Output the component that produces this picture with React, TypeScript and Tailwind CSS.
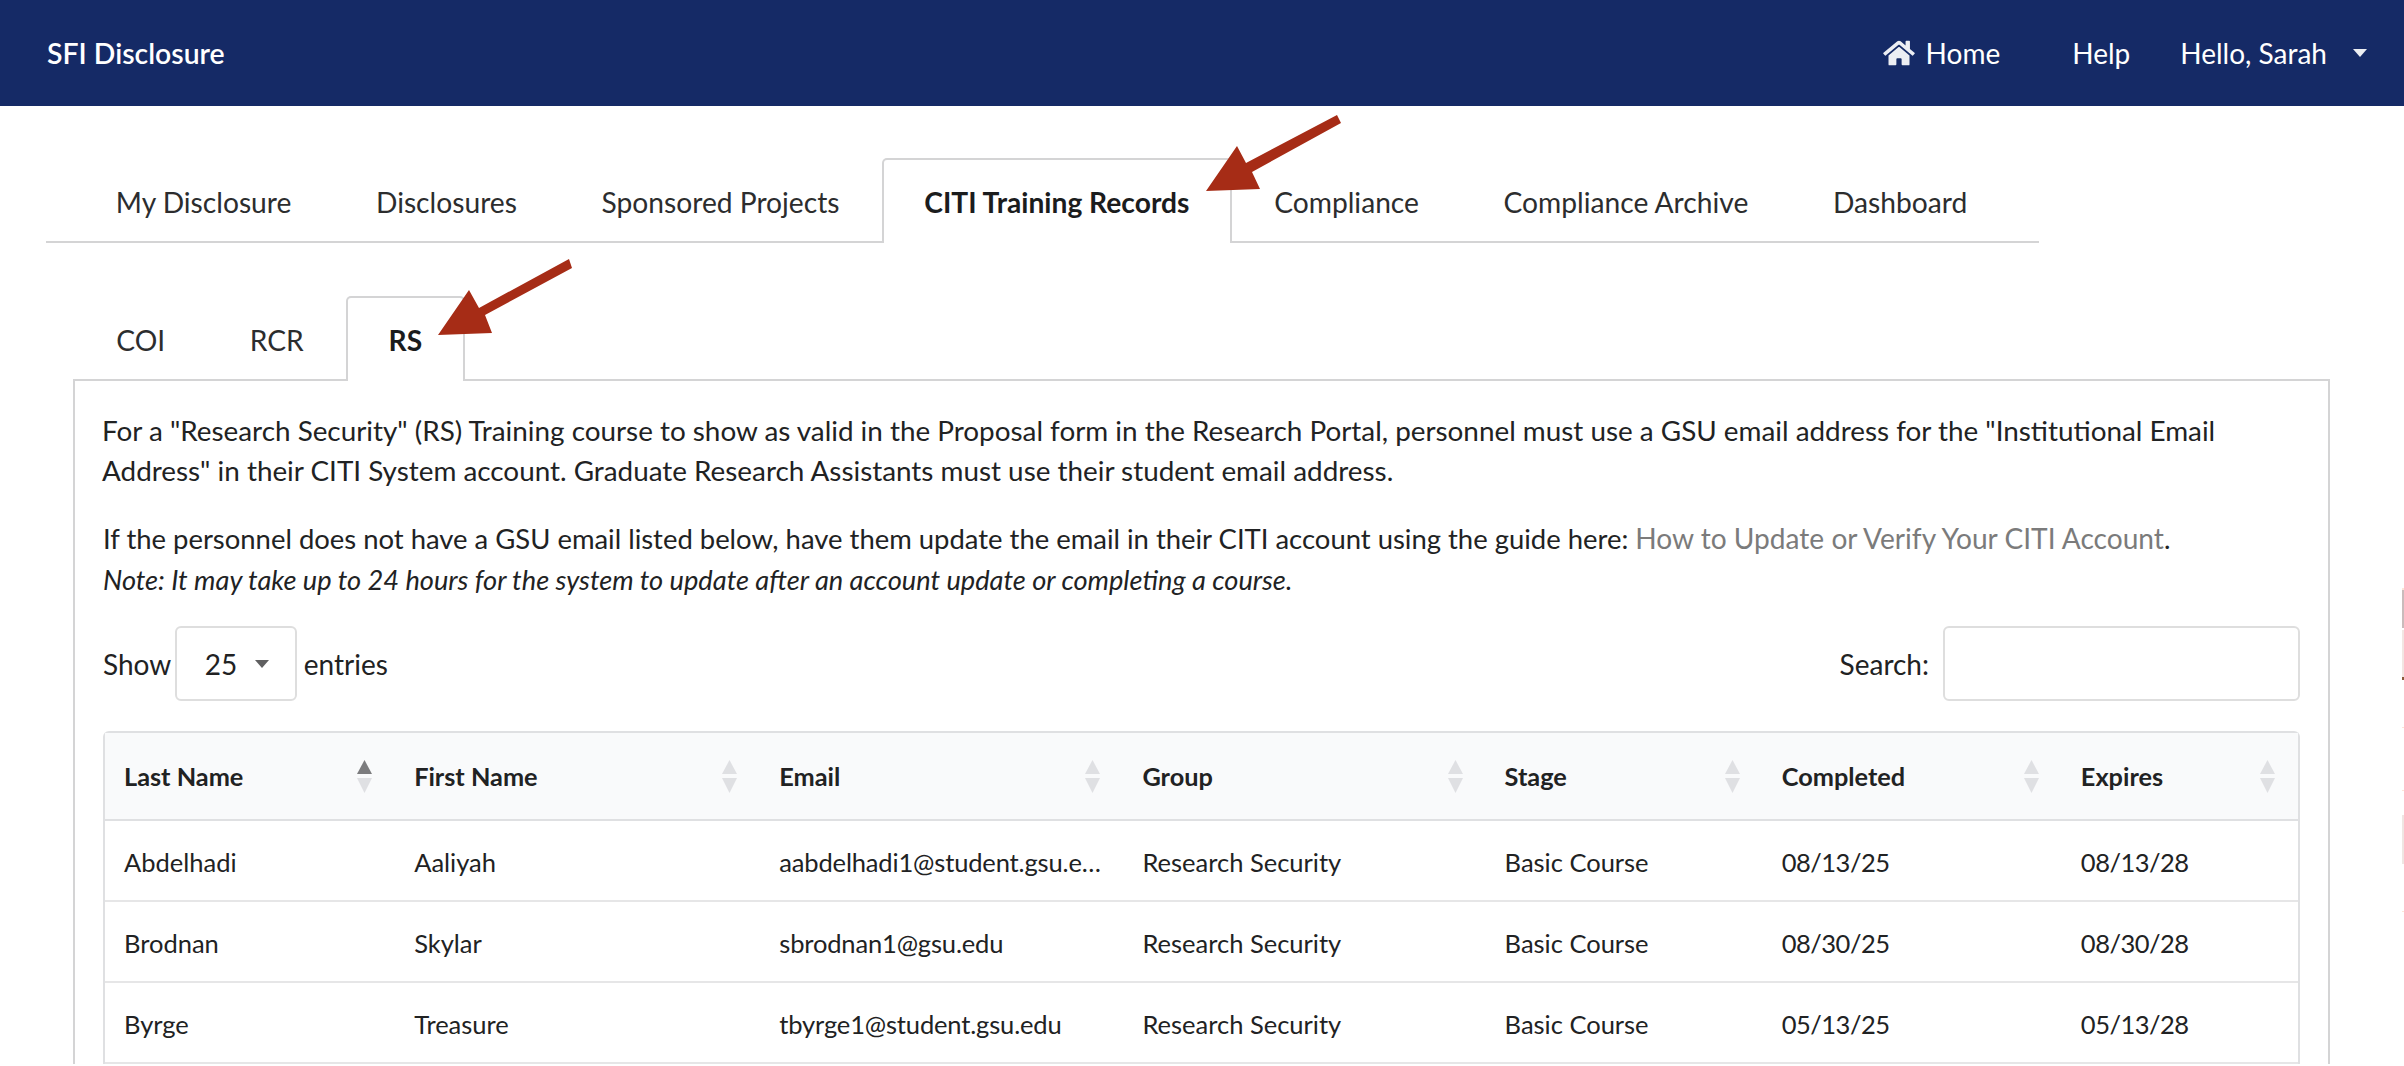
import React from 'react';
import { FaHome } from 'react-icons/fa';

const MAIN_TABS = ['My Disclosure', 'Disclosures', 'Sponsored Projects', 'CITI Training Records', 'Compliance', 'Compliance Archive', 'Dashboard'];
const SUB_TABS = ['COI', 'RCR', 'RS'];
const COLUMNS = [
  { label: 'Last Name', width: 'w-[290px]', sorted: true },
  { label: 'First Name', width: 'w-[365px]' },
  { label: 'Email', width: 'w-[363px]' },
  { label: 'Group', width: 'w-[362px]' },
  { label: 'Stage', width: 'w-[277px]' },
  { label: 'Completed', width: 'w-[299px]' },
  { label: 'Expires', width: 'w-[236px]' },
];
const ROWS = [
  ['Abdelhadi', 'Aaliyah', 'aabdelhadi1@student.gsu.edu', 'Research Security', 'Basic Course', '08/13/25', '08/13/28'],
  ['Brodnan', 'Skylar', 'sbrodnan1@gsu.edu', 'Research Security', 'Basic Course', '08/30/25', '08/30/28'],
  ['Byrge', 'Treasure', 'tbyrge1@student.gsu.edu', 'Research Security', 'Basic Course', '05/13/25', '05/13/28'],
];

const SortIcon = ({ active }: { active?: boolean }) => (
  <svg width="15" height="33" viewBox="0 0 15 33" className="shrink-0">
    <polygon points="7.5,0 15,14 0,14" fill={active ? '#7c7c7e' : '#dfe0e3'} />
    <polygon points="0,18 15,18 7.5,33" fill="#dfe0e3" />
  </svg>
);

const Tabs = ({ items, active, className }: { items: string[]; active: string; className: string }) => (
  <ul className={className}>
    {items.map((item) => (
      <li
        key={item}
        className={
          item === active
            ? 'relative -mb-[2px] flex h-[85px] items-center rounded-t-[5px] border-x-2 border-t-[2px] border-[#d4d4d5] bg-white px-[40.5px] pt-[2px] font-bold text-[#1b1c1d]'
            : 'flex items-center px-[42.3px] pt-[5px] text-[#2c2d2e]'
        }
      >
        {item}
      </li>
    ))}
  </ul>
);

const cellClass = (i: number) => {
  const base = 'truncate border-b-2 border-[#e6e6e7] pl-[19px] pr-[16px] pt-[3px]';
  if (i === 2) return `${base} tracking-[-0.15px]`;
  if (i >= 5) return `${base} tracking-[-0.5px]`;
  return base;
};

export default function App() {
  return (
    <div className="relative h-screen overflow-hidden bg-white font-['Lato','Open_Sans',sans-serif] text-[28px] text-[#212223]">
      <header className="flex h-[106px] items-center justify-between bg-[#152a66] pl-[47px] pr-[37px] text-white">
        <div className="text-[28.4px] font-semibold">SFI Disclosure</div>
        <nav className="flex items-center">
          <FaHome className="mr-[11px] h-[28px] w-[32px] text-[#eceef3]" />
          <span>Home</span>
          <span className="ml-[72px]">Help</span>
          <span className="ml-[50px]">Hello, Sarah</span>
          <svg width="14" height="8" viewBox="0 0 14 8" className="ml-[26px]">
            <polygon points="0,0 14,0 7,8" fill="#eceef3" />
          </svg>
        </nav>
      </header>

      <div className="pl-[46px] pt-[52px]">
        <Tabs
          items={MAIN_TABS}
          active="CITI Training Records"
          className="flex h-[85px] w-[1993px] border-b-2 border-[#d4d4d5] pl-[27.5px] text-[28.2px]"
        />
      </div>

      <div className="pl-[73px] pr-[74px] pt-[53px]">
        <Tabs items={SUB_TABS} active="RS" className="flex h-[85px] border-b-2 border-[#d4d4d5] pl-[1px] text-[28.2px]" />

        <div className="border-x-2 border-[#d4d4d5] px-[28px] pt-[30px]">
          <p className="-ml-[1px] text-[27.85px] leading-[40px]">
            For a "Research Security" (RS) Training course to show as valid in the Proposal form in the Research Portal, personnel must use a GSU email address for the "Institutional Email Address" in their CITI System account. Graduate Research Assistants must use their student email address.
          </p>
          <p className="mt-[27px] text-[27.45px] leading-[41px]">
            If the personnel does not have a GSU email listed below, have them update the email in their CITI account using the guide here:{' '}
            <span className="text-[28.1px] text-[#7b7b7b]">How to Update or Verify Your CITI Account</span>.
            <br />
            <em className="text-[27.2px]">Note: It may take up to 24 hours for the system to update after an account update or completing a course.</em>
          </p>

          <div className="mt-[26px] flex h-[75px] items-center justify-between">
            <div className="flex items-center">
              <span>Show</span>
              <div className="ml-[3.5px] mr-[7px] flex h-[75px] w-[122px] items-center rounded-[6px] border-2 border-[#dedede] pl-[28px]">
                <span>25</span>
                <svg width="14" height="8" viewBox="0 0 14 8" className="ml-[18px]">
                  <polygon points="0,0 14,0 7,8" fill="#5f5f60" />
                </svg>
              </div>
              <span>entries</span>
            </div>
            <div className="flex items-center">
              <span>Search:</span>
              <div className="ml-[14px] h-[75px] w-[357px] rounded-[6px] border-2 border-[#dedede]" />
            </div>
          </div>

          <div className="mt-[30px] rounded-t-[6px] border-x-2 border-t-2 border-[#dfe0e2] text-[25.3px]">
            <table className="w-full table-fixed border-collapse">
              <thead>
                <tr className="h-[87px] bg-[#f9fafb] text-left">
                  {COLUMNS.map((col) => (
                    <th key={col.label} className={`${col.width} border-b-2 border-[#dfe0e2] pl-[19px] pr-[23px] pt-[1px] font-bold`}>
                      <div className="flex items-center justify-between">
                        <span>{col.label}</span>
                        <SortIcon active={col.sorted} />
                      </div>
                    </th>
                  ))}
                </tr>
              </thead>
              <tbody>
                {ROWS.map((row) => (
                  <tr key={row[0]} className="h-[81px] text-[25.5px]">
                    {row.map((cell, i) => (
                      <td key={cell} className={cellClass(i)}>
                        {cell}
                      </td>
                    ))}
                  </tr>
                ))}
              </tbody>
            </table>
          </div>
        </div>
      </div>

      {/* annotation arrows and the sliver of another window at the right edge */}
      <svg className="pointer-events-none absolute left-0 top-0" width="2404" height="1066">
        <polygon points="1206,191 1237,146 1246,163 1337,115 1341,123 1252,172 1260,189" fill="#a62c16" />
        <polygon points="438,335 469,290 479,308 569,259 572,268 485,315 492,333" fill="#a62c16" />
        <rect x="2402" y="588" width="2" height="2" fill="#fde5d8" />
        <rect x="2402" y="590" width="2" height="38" fill="#c9bcbc" />
        <rect x="2402" y="630" width="2" height="47" fill="#f2e6e3" />
        <rect x="2402" y="677" width="2" height="3" fill="#8a5a3a" />
        <rect x="2402" y="727" width="2" height="1" fill="#fde5d8" />
        <rect x="2402" y="790" width="2" height="1" fill="#fde5d8" />
        <rect x="2402" y="815" width="2" height="49" fill="#efe6e3" />
        <rect x="2402" y="911" width="2" height="1" fill="#fde5d8" />
      </svg>
    </div>
  );
}
